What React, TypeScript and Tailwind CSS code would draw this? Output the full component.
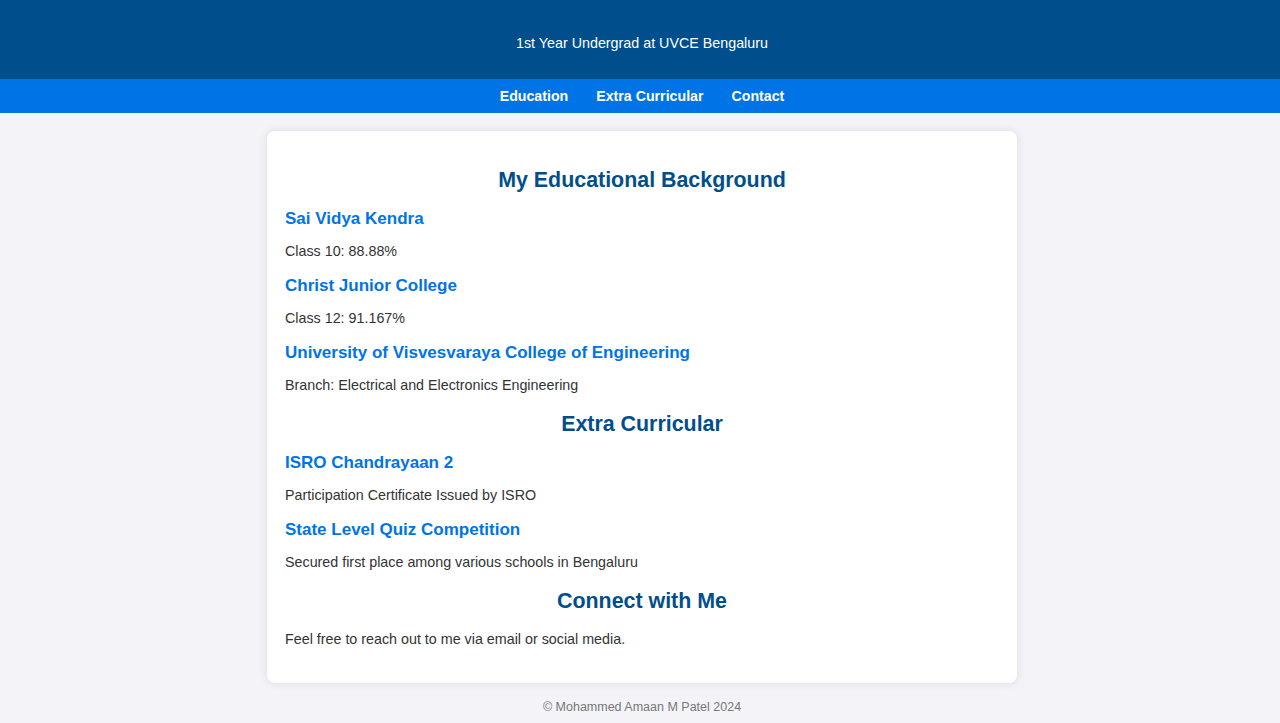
import type { FC } from "react";

const Sub: FC<{ title: string; text: string; first?: boolean }> = ({ title, text, first }) => (
  <>
    <h3 className={`${first ? "mt-4" : "mt-[15px]"} text-[17px] leading-[20px] font-bold text-[#0074e6]`}>{title}</h3>
    <p className="mt-[12px] text-[14.3px] leading-[20px] text-[#333]">{text}</p>
  </>
);

const App: FC = () => {
  return (
    <div className="min-h-[723px] bg-[#f4f4f8] pl-1 font-['Liberation_Sans',Arial,sans-serif]">
      <header className="-ml-1 flex h-[79px] items-center justify-center bg-[#004e8c] pt-[9px] pl-1 text-[14.3px] text-white">
        <p>1st Year Undergrad at UVCE Bengaluru</p>
      </header>
      <nav className="-ml-1 flex h-[34px] items-center justify-center gap-[28px] bg-[#0074e6] pt-[2px] pl-1 text-[14.2px] font-bold text-white">
        <a href="#education">Education</a>
        <a href="#extra">Extra Curricular</a>
        <a href="#contact">Contact</a>
      </nav>
      <main className="mx-auto mt-[18px] w-[750px] rounded-lg bg-white px-[18px] pt-[36px] pb-[34px] shadow-[0_0_10px_rgba(0,0,0,0.1)]">
        <section id="education">
          <h2 className="text-center text-[21.4px] leading-[26px] font-bold text-[#004e8c]">My Educational Background</h2>
          <Sub first title="Sai Vidya Kendra" text="Class 10: 88.88%" />
          <Sub title="Christ Junior College" text="Class 12: 91.167%" />
          <Sub title="University of Visvesvaraya College of Engineering" text="Branch: Electrical and Electronics Engineering" />
        </section>
        <section id="extra">
          <h2 className="mt-[16px] text-center text-[21.4px] leading-[26px] font-bold text-[#004e8c]">Extra Curricular</h2>
          <Sub first title="ISRO Chandrayaan 2" text="Participation Certificate Issued by ISRO" />
          <Sub title="State Level Quiz Competition" text="Secured first place among various schools in Bengaluru" />
        </section>
        <section id="contact">
          <h2 className="mt-[16px] text-center text-[21.4px] leading-[26px] font-bold text-[#004e8c]">Connect with Me</h2>
          <p className="mt-[15px] text-[14.3px] leading-[20px] text-[#333]">Feel free to reach out to me via email or social media.</p>
        </section>
      </main>
      <footer className="mt-4 pb-2 text-center text-[12.5px] leading-[16px] text-[#777]">
        © Mohammed Amaan M Patel 2024
      </footer>
    </div>
  );
};

export default App;
